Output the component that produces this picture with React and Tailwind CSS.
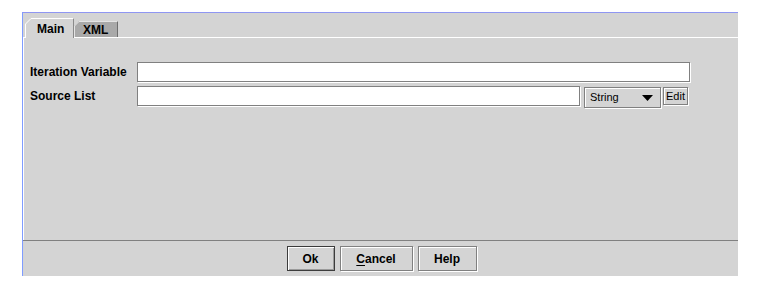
import React from "react";

const font = { fontFamily: '"Liberation Sans", Arial, sans-serif' };

function Field({ className = "" }) {
  return (
    <div
      className={`h-[20px] bg-white border border-[#808080] shadow-[1px_1px_0_#ffffff] ${className}`}
    />
  );
}

export default function App() {
  return (
    <div className="bg-white w-[757px] h-[289px] pl-[22px] pt-[12px]" style={font}>
      <div className="w-[716px] h-[264px] bg-[#d4d4d4] border-l border-t border-l-[#7f9cff] border-t-[#8f96f2] flex flex-col">
        {/* tab row */}
        <div className="h-[24px] flex items-end pl-[2px]">
          <div className="relative z-10 -mb-px flex h-[20px]">
            <svg width="6" height="20" className="block">
              <polygon points="0,6 6,0 6,20 0,20" fill="#d4d4d4" />
              <polyline points="0.5,20 0.5,6 6,0.5" fill="none" stroke="#ffffff" strokeWidth="1" />
            </svg>
            <div className="w-[43px] h-[20px] bg-[#d4d4d4] border-t border-t-white border-r border-r-[#8a8a8a] pl-[6px] pt-[3px] text-[12px] font-bold leading-[14px] text-black">
              Main
            </div>
          </div>
          <div className="flex h-[16px]">
            <svg width="5" height="16" className="block">
              <polygon points="0,5 5,0 5,16 0,16" fill="#a9a9a9" />
              <polyline points="0.5,16 0.5,5 5,0.5" fill="none" stroke="#e4e4e4" strokeWidth="1" />
            </svg>
            <div className="w-[39px] h-[16px] bg-[#a9a9a9] border-t border-t-[#e4e4e4] border-r border-r-[#6e6e6e] pl-[4px] pt-[1px] text-[12px] font-bold leading-[14px] text-black">
              XML
            </div>
          </div>
        </div>

        {/* content */}
        <div className="flex-1 border-t border-t-white border-l border-l-white pl-[6px] pt-[24px] flex flex-col gap-[4px]">
          <div className="flex items-center h-[20px]">
            <div className="w-[107px] text-[12px] font-bold text-black leading-[14px]">Iteration Variable</div>
            <Field className="w-[553px]" />
          </div>
          <div className="flex items-start h-[22px]">
            <div className="w-[107px] h-[20px] flex items-center text-[12px] font-bold text-black leading-[14px]">Source List</div>
            <Field className="w-[443px]" />
            <div className="ml-[4px] mt-px w-[77px] h-[21px] border border-[#808080] shadow-[inset_1px_1px_0_#ffffff,1px_1px_0_#ffffff] flex items-center justify-between pl-[5px] pr-[7px]">
              <span className="text-[11px] text-black leading-[13px]">String</span>
              <svg width="11" height="6" className="block">
                <polygon points="0,0 11,0 5.5,6" fill="#000" />
              </svg>
            </div>
            <div className="ml-[2px] mt-px w-[25px] h-[18px] border border-[#808080] shadow-[inset_1px_1px_0_#ffffff,1px_1px_0_#ffffff] flex items-center justify-center text-[11px] text-black leading-[13px]">
              Edit
            </div>
          </div>
        </div>

        {/* button bar */}
        <div className="h-[36px] border-t border-t-[#808080] flex items-center justify-center gap-[5px] pl-[2px]">
          <button className="w-[48px] h-[25px] border border-[#3c3c3c] shadow-[inset_1px_1px_0_#ffffff,inset_-1px_-1px_0_#9a9a9a] bg-[#d4d4d4] text-[12px] font-bold text-black leading-[14px]">
            Ok
          </button>
          <button className="w-[73px] h-[25px] border border-[#808080] shadow-[inset_1px_1px_0_#ffffff,1px_1px_0_#ffffff] bg-[#d4d4d4] text-[12px] font-bold text-black leading-[14px]">
            <span className="underline underline-offset-2">C</span>ancel
          </button>
          <button className="w-[59px] h-[25px] border border-[#808080] shadow-[inset_1px_1px_0_#ffffff,1px_1px_0_#ffffff] bg-[#d4d4d4] text-[12px] font-bold text-black leading-[14px]">
            Help
          </button>
        </div>
      </div>
    </div>
  );
}
